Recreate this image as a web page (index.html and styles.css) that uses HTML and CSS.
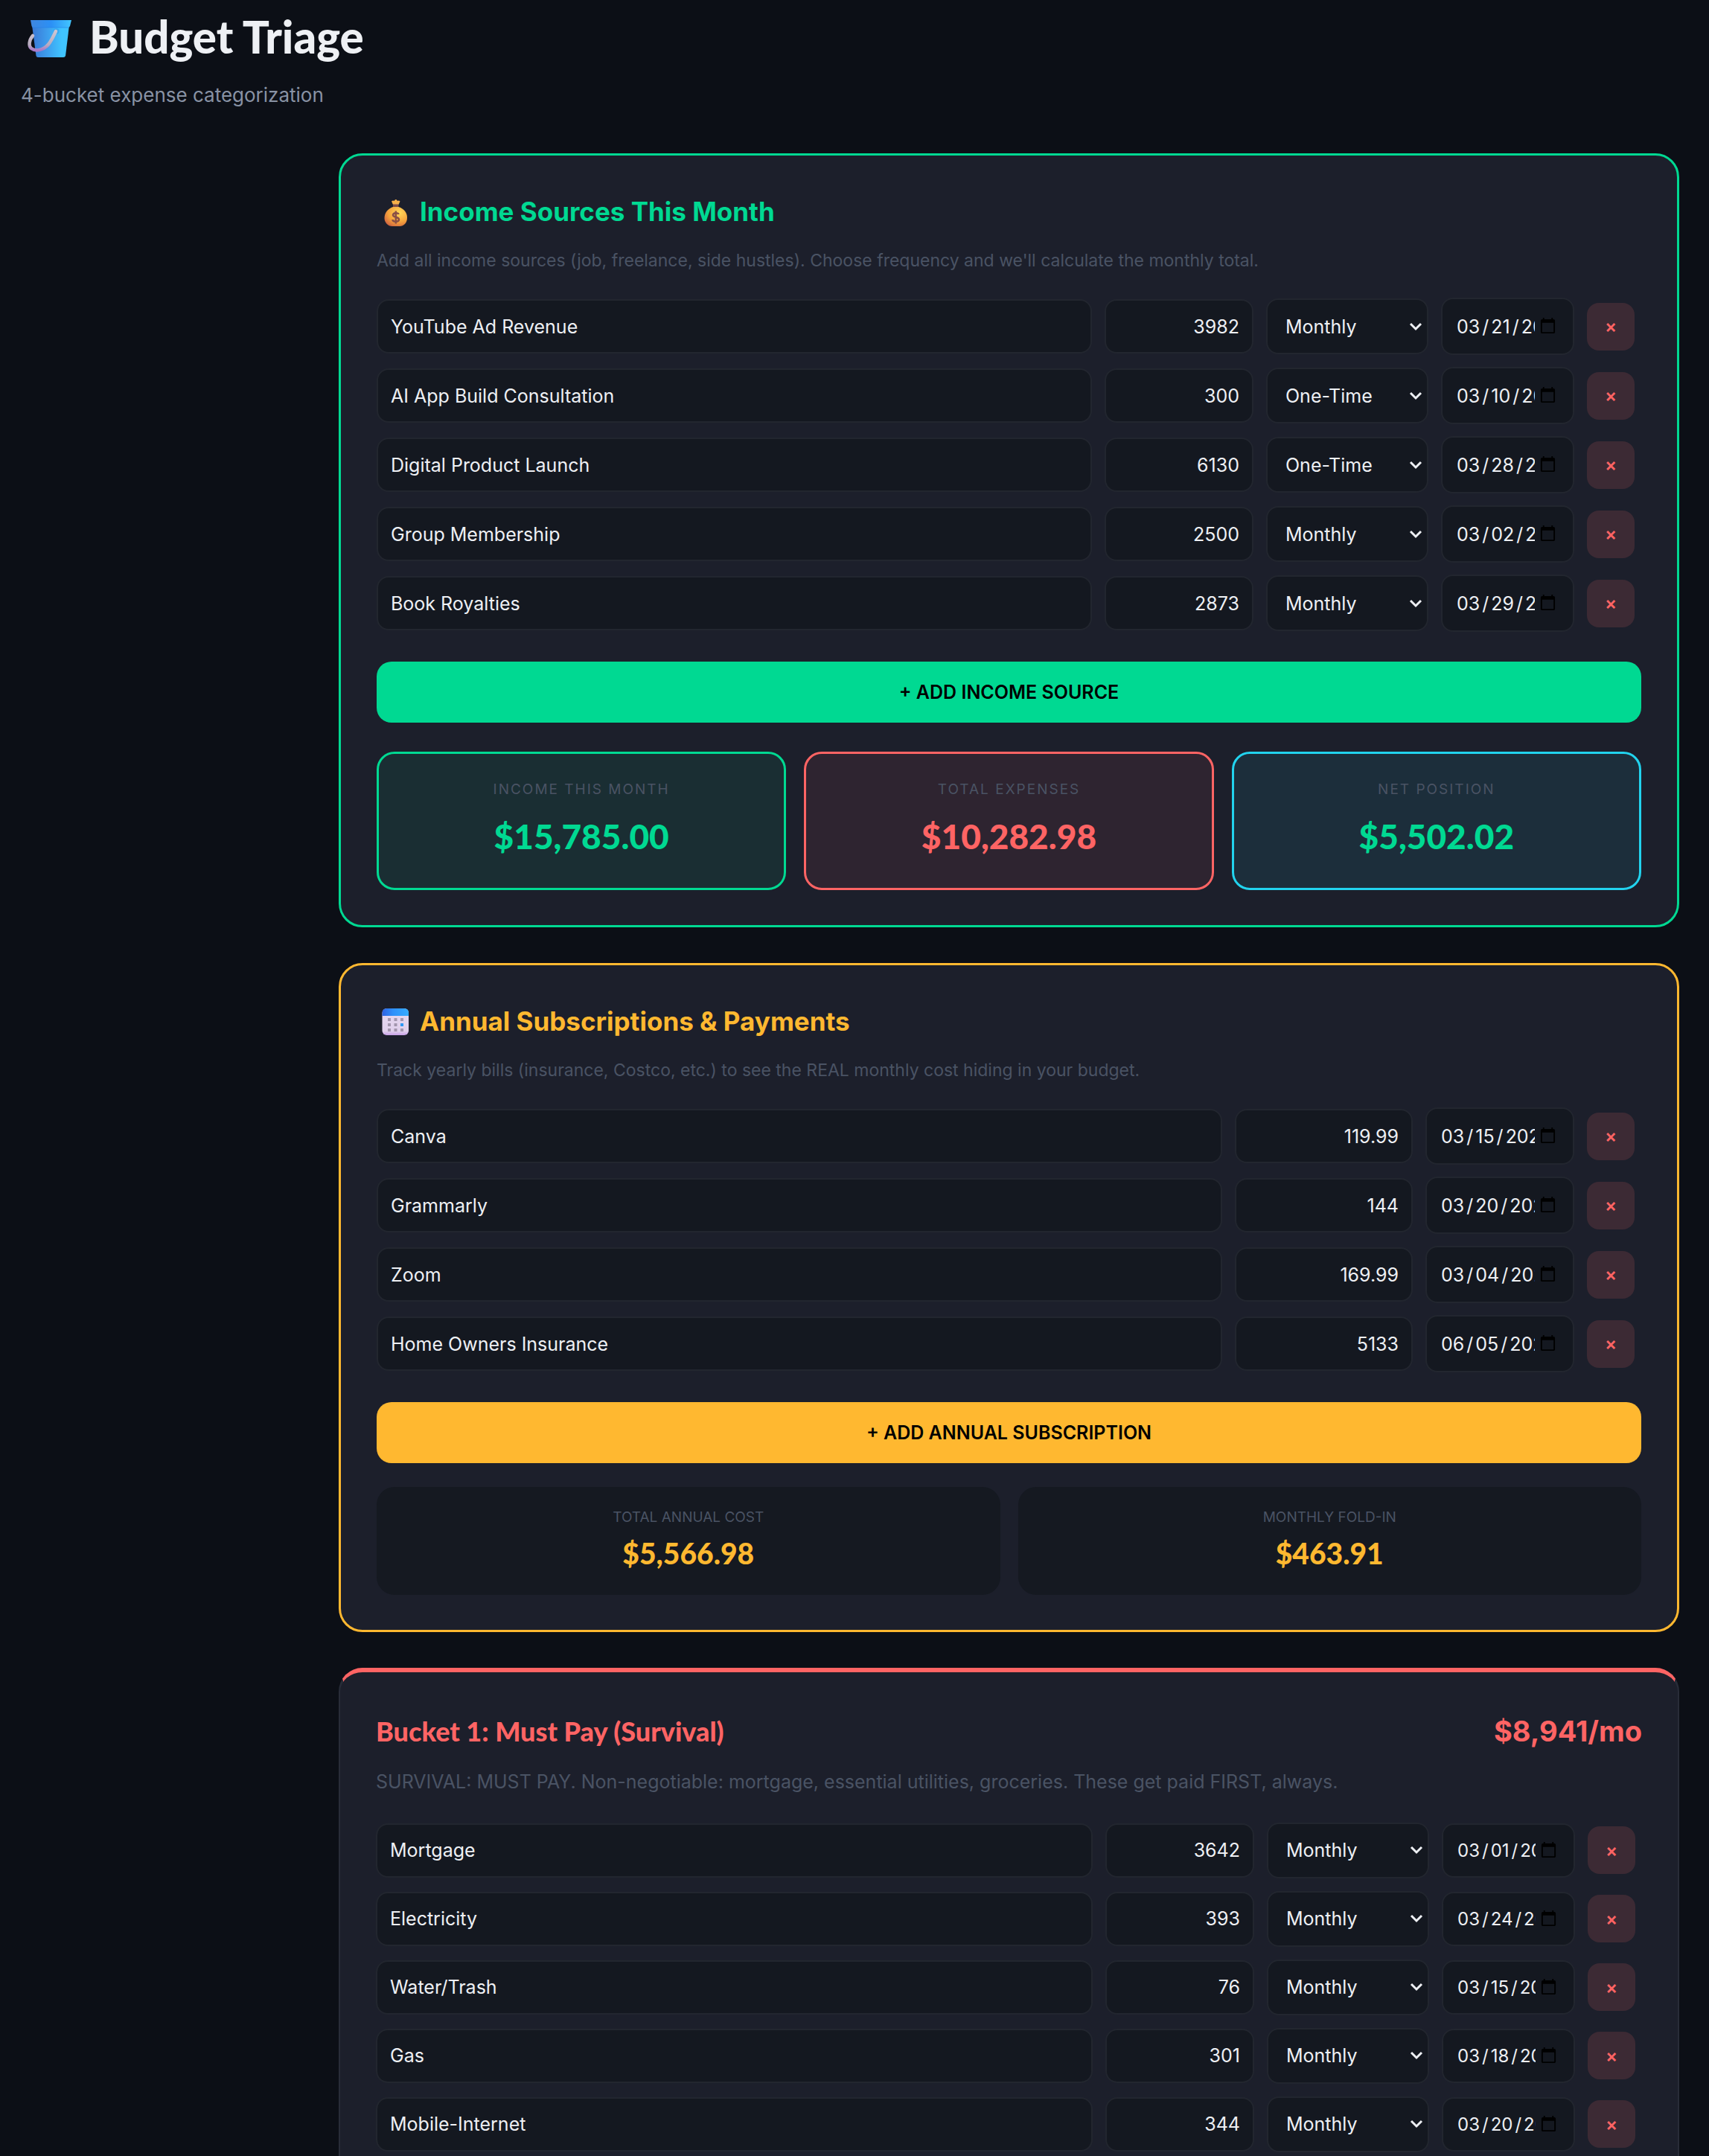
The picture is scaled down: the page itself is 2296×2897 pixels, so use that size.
FILE: index.html
```
<!DOCTYPE html>
<html lang="en">
<head>
    <meta charset="UTF-8">
    <meta name="viewport" content="width=device-width, initial-scale=1.0">
    <title>Budget Triage</title>
    <link rel="stylesheet" href="styles.css">
</head>
<body>
    <header class="page-header">
        <h1>
            <svg class="icon-bucket" viewBox="-2 -6 76 70" aria-hidden="true">
                <defs>
                    <linearGradient id="pail" x1="0" x2="1">
                        <stop offset="0" stop-color="#3a78d6"/>
                        <stop offset="0.4" stop-color="#3d9cec"/>
                        <stop offset="0.8" stop-color="#40c4ff"/>
                    </linearGradient>
                    <linearGradient id="rim" x1="0" x2="1">
                        <stop offset="0" stop-color="#3f86e0"/>
                        <stop offset="0.5" stop-color="#2b90f5"/>
                        <stop offset="1" stop-color="#42c6ff"/>
                    </linearGradient>
                    <linearGradient id="handle" x1="0" y1="0" x2="0" y2="1">
                        <stop offset="0" stop-color="#cfc5d2"/>
                        <stop offset="0.7" stop-color="#b9adc0"/>
                        <stop offset="1" stop-color="#a878c8"/>
                    </linearGradient>
                </defs>
                <path d="M13 14H63L58 55Q57.500 57 55 57H21Q19 57 18.500 55Z" fill="url(#pail)"/>
                <path d="M11 7H66L64 15Q63.500 17 61 17H15Q13 17 12.500 15Z" fill="url(#rim)"/>
                <path d="M14 17H62" stroke="#2480e8" stroke-width="1" opacity="0.6"/>
                <circle cx="45.500" cy="22" r="4" fill="#35a8f2"/>
                <path d="M14 28C9 34 8 42 12 45C20 51 32 45 37 37C41 31 43 26 45 22" fill="none" stroke="url(#handle)" stroke-width="4.500" stroke-linecap="round"/>
            </svg>
            Budget Triage
        </h1>
        <p class="subtitle">4-bucket expense categorization</p>
    </header>

    <main class="content">
        <section class="card card-income">
            <h2 class="card-title">
                <svg class="icon" viewBox="0 0 54 54" aria-hidden="true">
                    <defs>
                        <radialGradient id="bag" cx="0.65" cy="0.3" r="0.8">
                            <stop offset="0" stop-color="#ffd95a"/>
                            <stop offset="0.6" stop-color="#f5a23c"/>
                            <stop offset="1" stop-color="#cf6340"/>
                        </radialGradient>
                    </defs>
                    <path d="M22 18L20 13.500Q22 12 23.500 13Q26 9 28 13Q30 12 31.500 13.500L29.500 18Z" fill="#f7b049"/>
                    <path d="M22 17.500H29.500V22H22Z" fill="#7d4b48"/>
                    <path d="M22 21H29.500C37 23.500 41 29 41 35.500C41 43 36 47 31 47H21C15 47 10.500 42 10.500 36C10.500 29 15 23.500 22 21Z" fill="url(#bag)"/>
                    <path d="M29.500 31C29 28.500 22 28.300 22 32C22 35.500 30 34 30 38C30 42 21.500 41.500 21.500 38M25.800 26.500V43.500" fill="none" stroke="#8a4f45" stroke-width="2.500"/>
                </svg>
                Income Sources This Month
            </h2>
            <p class="card-desc">Add all income sources (job, freelance, side hustles). Choose frequency and we'll calculate the monthly total.</p>

            <div class="rows">
                <div class="row">
                    <input type="text" value="YouTube Ad Revenue" aria-label="Income source">
                    <input type="number" value="3982" aria-label="Amount">
                    <select aria-label="Frequency"><option selected>Monthly</option><option>One-Time</option></select>
                    <input type="date" value="2026-03-21" aria-label="Date">
                    <button type="button" class="delete-btn" aria-label="Delete">×</button>
                </div>
                <div class="row">
                    <input type="text" value="AI App Build Consultation" aria-label="Income source">
                    <input type="number" value="300" aria-label="Amount">
                    <select aria-label="Frequency"><option>Monthly</option><option selected>One-Time</option></select>
                    <input type="date" value="2026-03-10" aria-label="Date">
                    <button type="button" class="delete-btn" aria-label="Delete">×</button>
                </div>
                <div class="row">
                    <input type="text" value="Digital Product Launch" aria-label="Income source">
                    <input type="number" value="6130" aria-label="Amount">
                    <select aria-label="Frequency"><option>Monthly</option><option selected>One-Time</option></select>
                    <input type="date" value="2026-03-28" aria-label="Date">
                    <button type="button" class="delete-btn" aria-label="Delete">×</button>
                </div>
                <div class="row">
                    <input type="text" value="Group Membership" aria-label="Income source">
                    <input type="number" value="2500" aria-label="Amount">
                    <select aria-label="Frequency"><option selected>Monthly</option><option>One-Time</option></select>
                    <input type="date" value="2026-03-02" aria-label="Date">
                    <button type="button" class="delete-btn" aria-label="Delete">×</button>
                </div>
                <div class="row">
                    <input type="text" value="Book Royalties" aria-label="Income source">
                    <input type="number" value="2873" aria-label="Amount">
                    <select aria-label="Frequency"><option selected>Monthly</option><option>One-Time</option></select>
                    <input type="date" value="2026-03-29" aria-label="Date">
                    <button type="button" class="delete-btn" aria-label="Delete">×</button>
                </div>
            </div>

            <button type="button" class="add-btn">+ ADD INCOME SOURCE</button>

            <div class="summary">
                <div class="summary-box box-income">
                    <div class="summary-label">INCOME THIS MONTH</div>
                    <div class="summary-value">$15,785.00</div>
                </div>
                <div class="summary-box box-expenses">
                    <div class="summary-label">TOTAL EXPENSES</div>
                    <div class="summary-value">$10,282.98</div>
                </div>
                <div class="summary-box box-net">
                    <div class="summary-label">NET POSITION</div>
                    <div class="summary-value">$5,502.02</div>
                </div>
            </div>
        </section>

        <section class="card card-annual">
            <h2 class="card-title">
                <svg class="icon" viewBox="0 0 54 54" aria-hidden="true">
                    <defs>
                        <linearGradient id="calTop" x1="0" x2="1">
                            <stop offset="0" stop-color="#2f62e0"/>
                            <stop offset="0.4" stop-color="#2f90fa"/>
                            <stop offset="1" stop-color="#36acff"/>
                        </linearGradient>
                        <linearGradient id="calPage" x1="0" y1="0" x2="0" y2="1">
                            <stop offset="0" stop-color="#e6d9f0"/>
                            <stop offset="0.85" stop-color="#e0d0ec"/>
                            <stop offset="1" stop-color="#c8a0e8"/>
                        </linearGradient>
                    </defs>
                    <rect x="7.500" y="10" width="35.500" height="36" rx="6" fill="url(#calPage)"/>
                    <path d="M7.500 20V16Q7.500 10 13.500 10H37Q43 10 43 16V20Z" fill="url(#calTop)"/>
                    <path d="M15 23h4v4h-4zM23.500 23h4v4h-4zM32 23h4v4h-4zM15 30h4v4h-4zM23.500 30h4v4h-4zM15 37h4v4h-4zM23.500 37h4v4h-4zM32 37h4v4h-4z" fill="#a396ae"/>
                    <path d="M32 30h4v4h-4z" fill="#2f98f5"/>
                </svg>
                Annual Subscriptions &amp; Payments
            </h2>
            <p class="card-desc">Track yearly bills (insurance, Costco, etc.) to see the REAL monthly cost hiding in your budget.</p>

            <div class="rows">
                <div class="row row-annual">
                    <input type="text" value="Canva" aria-label="Subscription">
                    <input type="number" value="119.99" step="0.01" aria-label="Amount">
                    <input type="date" value="2026-03-15" aria-label="Due date">
                    <button type="button" class="delete-btn" aria-label="Delete">×</button>
                </div>
                <div class="row row-annual">
                    <input type="text" value="Grammarly" aria-label="Subscription">
                    <input type="number" value="144" step="0.01" aria-label="Amount">
                    <input type="date" value="2026-03-20" aria-label="Due date">
                    <button type="button" class="delete-btn" aria-label="Delete">×</button>
                </div>
                <div class="row row-annual">
                    <input type="text" value="Zoom" aria-label="Subscription">
                    <input type="number" value="169.99" step="0.01" aria-label="Amount">
                    <input type="date" value="2026-03-04" aria-label="Due date">
                    <button type="button" class="delete-btn" aria-label="Delete">×</button>
                </div>
                <div class="row row-annual">
                    <input type="text" value="Home Owners Insurance" aria-label="Subscription">
                    <input type="number" value="5133" step="0.01" aria-label="Amount">
                    <input type="date" value="2026-06-05" aria-label="Due date">
                    <button type="button" class="delete-btn" aria-label="Delete">×</button>
                </div>
            </div>

            <button type="button" class="add-btn">+ ADD ANNUAL SUBSCRIPTION</button>

            <div class="totals">
                <div class="total-box">
                    <div class="total-label">TOTAL ANNUAL COST</div>
                    <div class="total-value">$5,566.98</div>
                </div>
                <div class="total-box">
                    <div class="total-label">MONTHLY FOLD-IN</div>
                    <div class="total-value">$463.91</div>
                </div>
            </div>
        </section>

        <section class="card card-bucket">
            <div class="bucket-header">
                <h2 class="bucket-title">Bucket 1: Must Pay (Survival)</h2>
                <div class="bucket-total">$8,941/mo</div>
            </div>
            <p class="card-desc">SURVIVAL: MUST PAY. Non-negotiable: mortgage, essential utilities, groceries. These get paid FIRST, always.</p>

            <div class="rows">
                <div class="row">
                    <input type="text" value="Mortgage" aria-label="Expense">
                    <input type="number" value="3642" aria-label="Amount">
                    <select aria-label="Frequency"><option>Monthly</option></select>
                    <input type="date" value="2026-03-01" aria-label="Due date">
                    <button type="button" class="delete-btn" aria-label="Delete">×</button>
                </div>
                <div class="row">
                    <input type="text" value="Electricity" aria-label="Expense">
                    <input type="number" value="393" aria-label="Amount">
                    <select aria-label="Frequency"><option>Monthly</option></select>
                    <input type="date" value="2026-03-24" aria-label="Due date">
                    <button type="button" class="delete-btn" aria-label="Delete">×</button>
                </div>
                <div class="row">
                    <input type="text" value="Water/Trash" aria-label="Expense">
                    <input type="number" value="76" aria-label="Amount">
                    <select aria-label="Frequency"><option>Monthly</option></select>
                    <input type="date" value="2026-03-15" aria-label="Due date">
                    <button type="button" class="delete-btn" aria-label="Delete">×</button>
                </div>
                <div class="row">
                    <input type="text" value="Gas" aria-label="Expense">
                    <input type="number" value="301" aria-label="Amount">
                    <select aria-label="Frequency"><option>Monthly</option></select>
                    <input type="date" value="2026-03-18" aria-label="Due date">
                    <button type="button" class="delete-btn" aria-label="Delete">×</button>
                </div>
                <div class="row">
                    <input type="text" value="Mobile-Internet" aria-label="Expense">
                    <input type="number" value="344" aria-label="Amount">
                    <select aria-label="Frequency"><option>Monthly</option></select>
                    <input type="date" value="2026-03-20" aria-label="Due date">
                    <button type="button" class="delete-btn" aria-label="Delete">×</button>
                </div>
            </div>
        </section>
    </main>
</body>
</html>
```
FILE: styles.css
```
:root {
    --bg: #0c0f16;
    --card: #1c1f2b;
    --field: #141820;
    --field-border: #22262f;
    --text: #eef0f4;
    --muted: #8892a4;
    --dim: #4a5364;
    --green: #00d992;
    --amber: #ffb830;
    --red: #ff6464;
    --cyan: #22d3ee;
}

* {
    margin: 0;
    padding: 0;
    box-sizing: border-box;
}

body {
    height: 100vh;
    overflow: hidden;
    background: var(--bg);
    color: var(--text);
    font-family: 'Inter', sans-serif;
    font-size: 25px;
}

.page-header {
    padding: 14px 28px 0;
    margin-bottom: 58px;
}

h1 {
    display: flex;
    align-items: center;
    gap: 16px;
    font-family: 'Lato', sans-serif;
    font-size: 60px;
    font-weight: 900;
    line-height: 70px;
    margin-bottom: 24px;
}

.icon-bucket {
    width: 76px;
    height: 70px;
}

.subtitle {
    color: var(--muted);
    font-size: 26px;
    line-height: 40px;
}

.content {
    padding: 0 40px 0 455px;
}

.card {
    background: var(--card);
    border: 3px solid;
    border-radius: 32px;
    padding: 47px 48px;
    margin-bottom: 48px;
}

.card-income {
    --accent: var(--green);
    border-color: var(--green);
}

.card-annual {
    --accent: var(--amber);
    border-color: var(--amber);
}

.card-bucket {
    border: 2px solid #282c38;
    border-top: 6px solid var(--red);
    padding-bottom: 96px;
}

.card-title {
    display: flex;
    align-items: center;
    gap: 4px;
    color: var(--accent);
    font-size: 35px;
    font-weight: 700;
    line-height: 56px;
    margin-bottom: 18px;
}

.icon {
    width: 54px;
    height: 54px;
}

.card-desc {
    color: var(--dim);
    font-size: 23px;
    line-height: 40px;
    margin-bottom: 30px;
}

.bucket-header {
    display: flex;
    justify-content: space-between;
    align-items: center;
    line-height: 64px;
    margin-bottom: 16px;
    color: var(--red);
}

.bucket-title {
    font-family: 'Lato', sans-serif;
    font-size: 36px;
    font-weight: 900;
}

.bucket-total {
    font-size: 38px;
    font-weight: 700;
}

.card-bucket .card-desc {
    font-size: 25px;
    margin-bottom: 34px;
}

/* Entry rows */
.rows {
    display: grid;
    gap: 16px;
}

.row {
    display: grid;
    grid-template-columns: 1fr 200px 218px 179px 73px;
    gap: 17px;
    align-items: center;
    min-height: 77px;
}

.row-annual {
    grid-template-columns: 1fr 239px 200px 73px;
}

.card-bucket .row {
    min-height: 76px;
}

input,
select {
    width: 100%;
    min-width: 0;
    height: 73px;
    padding: 0 17px;
    background: var(--field);
    border: 2px solid var(--field-border);
    border-radius: 16px;
    color: var(--text);
    font-family: inherit;
    font-size: 25px;
}

input[type="number"] {
    text-align: right;
    appearance: textfield;
    -moz-appearance: textfield;
}

input[type="number"]::-webkit-inner-spin-button {
    appearance: none;
}

select {
    height: 75px;
    padding: 0 24px;
    appearance: none;
    background: var(--field) url("data:image/svg+xml,%3Csvg xmlns='http://www.w3.org/2000/svg' viewBox='0 0 18 12'%3E%3Cpath d='M2 2L9 9L16 2' fill='none' stroke='%23eef0f4' stroke-width='3'/%3E%3C/svg%3E") no-repeat right 6px center / 18px 12px;
}

input[type="date"] {
    height: 77px;
    padding: 0 21px 0 18px;
}

.card-bucket input[type="date"] {
    height: 73px;
    font-size: 24px;
}

/* breathing room around the slashes */
input[type="date"]::-webkit-datetime-edit-text {
    padding: 0 2px;
}

input[type="date"]::-webkit-calendar-picker-indicator {
    width: 25px;
    height: 25px;
    padding: 0;
    margin-left: 5px;
}

.delete-btn {
    width: 64px;
    height: 64px;
    background: #3c2a34;
    border: none;
    border-radius: 16px;
    color: var(--red);
    font-family: inherit;
    font-size: 24px;
    font-weight: 600;
    cursor: pointer;
}

.add-btn {
    display: block;
    width: 100%;
    height: 82px;
    margin-top: 40px;
    background: var(--accent);
    border: none;
    border-radius: 20px;
    color: #000;
    font-family: inherit;
    font-size: 25px;
    font-weight: 600;
    cursor: pointer;
}

/* Income / expense / net boxes */
.summary {
    display: grid;
    grid-template-columns: repeat(3, 1fr);
    gap: 24px;
    margin-top: 39px;
}

.summary-box {
    border: 3px solid;
    border-radius: 24px;
    padding: 35px 24px 40px;
    text-align: center;
}

.box-income {
    background: #1a2e33;
    border-color: var(--green);
}

.box-expenses {
    background: #2e2430;
    border-color: var(--red);
}

.box-net {
    background: #1c2e3b;
    border-color: var(--cyan);
}

.summary-label {
    color: var(--dim);
    font-size: 19px;
    line-height: 26px;
    letter-spacing: 2px;
    margin-bottom: 21px;
}

.summary-value {
    color: var(--green);
    font-family: 'Lato', sans-serif;
    font-size: 46px;
    font-weight: 900;
    line-height: 58px;
}

.box-expenses .summary-value {
    color: var(--red);
}

.totals {
    display: grid;
    grid-template-columns: repeat(2, 1fr);
    gap: 24px;
    margin-top: 32px;
}

.total-box {
    background: #151921;
    border-radius: 24px;
    padding: 28px 24px 32px;
    text-align: center;
}

.total-label {
    color: var(--dim);
    font-size: 19px;
    line-height: 26px;
    margin-bottom: 11px;
}

.total-value {
    color: var(--amber);
    font-family: 'Lato', sans-serif;
    font-size: 39px;
    font-weight: 900;
    line-height: 48px;
}
```
